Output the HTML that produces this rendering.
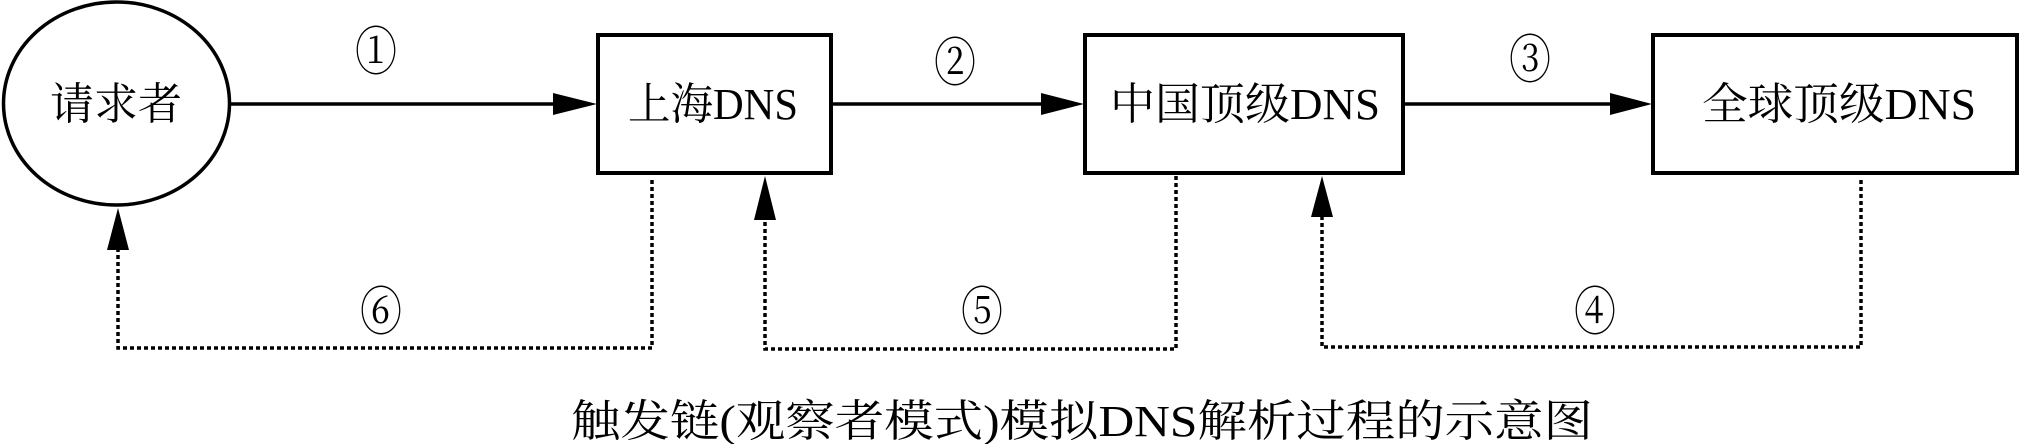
<!DOCTYPE html>
<html><head><meta charset="utf-8"><style>
html,body{margin:0;padding:0;background:#fff;}
svg{display:block;}
text{font-family:"Liberation Serif","Noto Serif CJK SC",serif;fill:#000;}
</style></head><body>
<svg width="2019" height="444" viewBox="0 0 2019 444" xmlns="http://www.w3.org/2000/svg">
<ellipse cx="116.5" cy="103.5" rx="113" ry="101.5" fill="none" stroke="#000" stroke-width="3.5"/>
<rect x="598" y="35" width="233" height="138" fill="none" stroke="#000" stroke-width="4"/>
<rect x="1085" y="35" width="318" height="138" fill="none" stroke="#000" stroke-width="4"/>
<rect x="1653" y="35" width="364" height="138" fill="none" stroke="#000" stroke-width="4"/>
<g stroke="#000" stroke-width="3.5">
<line x1="231" y1="104" x2="560" y2="104"/>
<line x1="831" y1="104" x2="1050" y2="104"/>
<line x1="1403" y1="104" x2="1615" y2="104"/>
</g>
<g fill="#000">
<polygon points="553,93 597,104 553,115"/>
<polygon points="1041,93 1084,104 1041,115"/>
<polygon points="1610,93 1652,104 1610,115"/>
<polygon points="107,250 118,208 129,250"/>
<polygon points="754,220 765,176 776,220"/>
<polygon points="1311,217 1322,176 1333,217"/>
</g>
<g fill="none" stroke="#000" stroke-width="3.5" stroke-dasharray="4 3">
<polyline points="652,180 652,348 118,348 118,250"/>
<polyline points="1176,176 1176,349 765,349 765,220"/>
<polyline points="1861,180 1861,347 1322,347 1322,217"/>
</g>
<g font-size="52" text-anchor="middle">
<text x="376" y="70" textLength="42" lengthAdjust="spacingAndGlyphs">①</text>
<text x="955" y="81" textLength="42" lengthAdjust="spacingAndGlyphs">②</text>
<text x="1530" y="78" textLength="42" lengthAdjust="spacingAndGlyphs">③</text>
<text x="381" y="330" textLength="42" lengthAdjust="spacingAndGlyphs">⑥</text>
<text x="982" y="330" textLength="42" lengthAdjust="spacingAndGlyphs">⑤</text>
<text x="1595" y="330" textLength="42" lengthAdjust="spacingAndGlyphs">④</text>
</g>
<g font-size="44" text-anchor="middle">
<text x="116" y="119">请求者</text>
<text x="713" y="119" textLength="170" lengthAdjust="spacingAndGlyphs">上海DNS</text>
<text x="1245" y="119" textLength="270" lengthAdjust="spacingAndGlyphs">中国顶级DNS</text>
<text x="1839" y="119" textLength="274" lengthAdjust="spacingAndGlyphs">全球顶级DNS</text>
<text x="1082" y="436" textLength="1022" lengthAdjust="spacingAndGlyphs">触发链(观察者模式)模拟DNS解析过程的示意图</text>
</g>
</svg>
</body></html>
